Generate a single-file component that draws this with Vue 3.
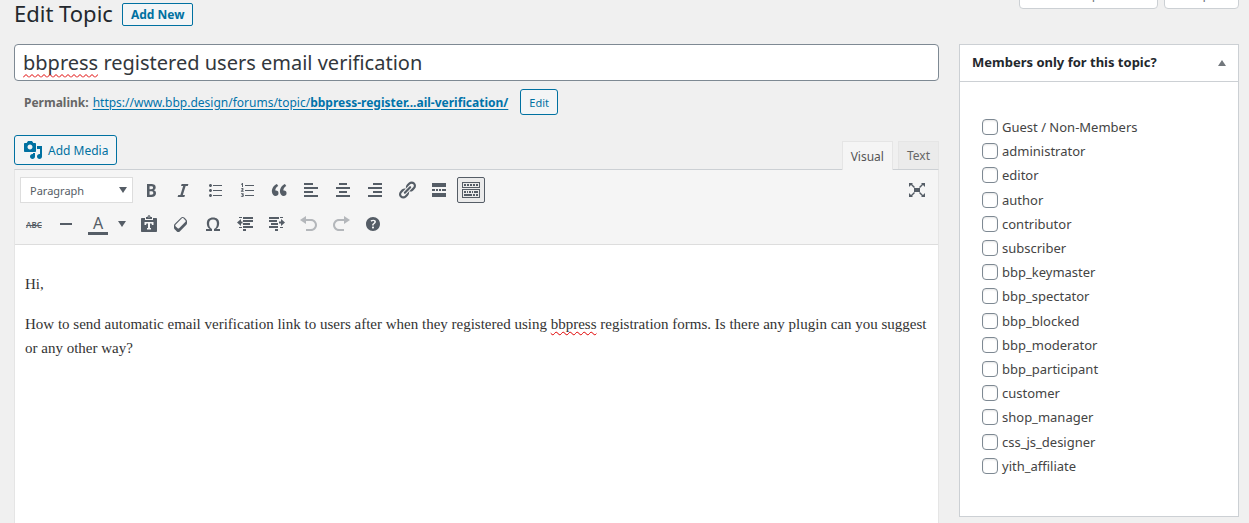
<script setup>
import { ref } from 'vue'

const title = ref('bbpress registered users email verification')
const roles = [
  'Guest / Non-Members', 'administrator', 'editor', 'author', 'contributor', 'subscriber',
  'bbp_keymaster', 'bbp_spectator', 'bbp_blocked', 'bbp_moderator', 'bbp_participant',
  'customer', 'shop_manager', 'css_js_designer', 'yith_affiliate',
]
const checked = ref([])
const collapsed = ref(false)

const rowOne = [
  { name: 'Bold', d: 'M6 4v13h4.54c1.37 0 2.46-.33 3.26-1 .8-.66 1.2-1.58 1.2-2.77 0-.84-.17-1.51-.51-2.01s-.9-.85-1.67-1.03v-.09c.57-.1 1.02-.4 1.36-.9s.51-1.13.51-1.91c0-1.14-.39-1.98-1.17-2.5C12.75 4.26 11.5 4 9.78 4H6zm2.57 5.15V6.26h1.36c.73 0 1.27.11 1.61.32.34.22.51.58.51 1.07 0 .54-.16.92-.47 1.15s-.82.35-1.51.35h-1.5zm0 2.19h1.6c1.44 0 2.16.53 2.16 1.61 0 .6-.17 1.05-.51 1.34s-.86.43-1.57.43H8.57v-3.38z' },
  { name: 'Italic', d: 'M14.78 6h-2.13l-2.8 9h2.12l-.62 2H4.6l.62-2h2.14l2.8-9H8.03l.62-2h6.75z' },
  { name: 'Bulleted list', d: 'M5.5 7C4.67 7 4 6.33 4 5.5 4 4.68 4.67 4 5.5 4 6.32 4 7 4.68 7 5.5 7 6.33 6.32 7 5.5 7zM8 5h9v1H8V5zm-2.5 7c-.83 0-1.5-.67-1.5-1.5C4 9.68 4.67 9 5.5 9c.82 0 1.5.68 1.5 1.5 0 .83-.68 1.5-1.5 1.5zM8 10h9v1H8v-1zm-2.5 7c-.83 0-1.5-.67-1.5-1.5 0-.82.67-1.5 1.5-1.5.82 0 1.5.68 1.5 1.5 0 .83-.68 1.5-1.5 1.5zM8 15h9v1H8v-1z' },
  { name: 'Numbered list', d: 'M8 5h9v1H8zM8 10h9v1H8zM8 15h9v1H8zM4 4.2 5.2 3H6v4H5V4.4l-.6.5zM4 8.6c.8-.8 2.6-.7 2.6.5 0 .8-.8 1.3-1.2 1.7h1.3v.9H3.9V11l1.300-1.200c.5-.5.200-.900-.700-.400zM4 13.200h2.600v1.500c.6.300.400 2.300-1.200 2.300-.600 0-1.100-.100-1.500-.400v-.800c.800.400 1.700.400 1.700-.100s-.500-.500-1-.500v-.700c.500 0 .900 0 .900-.400 0-.300-.800-.300-1.500 0z' },
  { name: 'Blockquote', d: 'M9.49 13.22c0-.74-.2-1.38-.61-1.9-.62-.78-1.83-.88-2.53-.72-.29-1.65 1.11-3.75 2.92-4.65L7.88 4c-2.73 1.3-5.42 4.28-4.96 8.05C3.21 14.43 4.59 16 6.54 16c.85 0 1.56-.25 2.12-.75s.83-1.18.83-2.03zm8.05 0c0-.74-.2-1.38-.61-1.9-.63-.78-1.83-.88-2.53-.72-.29-1.65 1.11-3.75 2.92-4.65L15.93 4c-2.73 1.3-5.41 4.28-4.95 8.05.29 2.38 1.66 3.95 3.61 3.95.85 0 1.56-.25 2.12-.75s.83-1.18.83-2.03z' },
  { name: 'Align left', d: 'M12 5V3H3v2h9zm5 4V7H3v2h14zm-5 4v-2H3v2h9zm5 4v-2H3v2h14z' },
  { name: 'Align center', d: 'M14 5V3H6v2h8zm3 4V7H3v2h14zm-3 4v-2H6v2h8zm3 4v-2H3v2h14z' },
  { name: 'Align right', d: 'M17 5V3H8v2h9zm0 4V7H3v2h14zm0 4v-2H8v2h9zm0 4v-2H3v2h14z' },
  { name: 'Insert link', d: 'M17.74 2.76c1.68 1.69 1.68 4.41 0 6.1l-1.53 1.52c-1.12 1.12-2.7 1.47-4.14 1.09l2.62-2.61.76-.77.76-.76c.84-.84.84-2.2 0-3.04-.84-.85-2.2-.85-3.04 0l-.77.76-3.38 3.38c-.37-1.44-.02-3.02 1.1-4.14l1.52-1.53c1.69-1.68 4.42-1.68 6.1 0zM8.59 13.43l5.34-5.34c.42-.42.42-1.1 0-1.52-.44-.43-1.13-.39-1.53 0l-5.33 5.34c-.42.42-.42 1.1 0 1.52.44.43 1.13.39 1.52 0zm-.76 2.29l4.14-4.15c.38 1.44.03 3.02-1.09 4.14l-1.52 1.53c-1.69 1.68-4.41 1.68-6.1 0-1.68-1.68-1.68-4.42 0-6.1l1.53-1.52c1.12-1.12 2.7-1.47 4.14-1.1l-4.14 4.15c-.85.84-.85 2.2 0 3.05.84.84 2.2.84 3.04 0z' },
  { name: 'Read more', d: 'M3 3h14v4H3zM3 9h3v2H3zM7 9h2v2H7zM10 9h2v2h-2zM13 9h4v2h-4zM3 13h14v4H3z' },
  { name: 'Toolbar toggle', active: true, d: 'M1 2h18v6H1zM2 3v4h16V3zM1 9h18v9H1zM2 10v7h16v-7zM3 4h2v2H3zM6 4h2v2H6zM9 4h2v2H9zM12 4h2v2h-2zM15 4h2v2h-2zM3 11h2v2H3zM6 11h1v2H6zM8 11h2v2H8zM11 11h1v2h-1zM13 11h4v2h-4zM3 14h8v2H3zM12 14h2v2h-2zM15 14h2v2h-2z' },
]
const rowTwo = [
  { name: 'Paste as text', d: 'M3 4h3v2h8V4h3c.6 0 1 .4 1 1v12c0 .6-.4 1-1 1H3c-.6 0-1-.4-1-1V5c0-.6.400-1 1-1zM7 5V3h1.500c0-2.500 3-2.500 3 0H13v2zM9.500 2.500v1h1v-1zM5.500 8v3H7l.5-1.500H9V14H8v1.500h4V14h-1V9.500h1.500L13 11h1.500V8z' },
  { name: 'Clear formatting', d: 'M14.29 4.59l1.1 1.11c.41.4.61.94.61 1.47v2.12c0 .53-.2 1.07-.61 1.47l-6.63 6.63c-.4.41-.94.61-1.47.61s-1.07-.2-1.47-.61l-1.11-1.1-1.1-1.11c-.41-.4-.61-.94-.61-1.47v-2.12c0-.54.2-1.07.61-1.48l6.63-6.62c.4-.41.94-.61 1.47-.61s1.06.2 1.47.61zm-6.21 9.7l6.42-6.42c.39-.39.39-1.03 0-1.43L12.36 4.3c-.19-.19-.45-.29-.72-.29s-.52.1-.71.29l-6.42 6.42c-.39.4-.39 1.04 0 1.43l2.14 2.14c.38.38 1.04.38 1.43 0z' },
  { name: 'Special character', d: 'M10 5.4c1.27 0 2.24.36 2.91 1.08.66.71 1 1.76 1 3.13 0 1.28-.23 2.37-.69 3.27-.47.89-1.27 1.52-2.22 2.12v2h6v-2h-3.69c.92-.64 1.62-1.34 2.12-2.34.49-1.01.74-2.13.74-3.35 0-1.78-.55-3.19-1.65-4.22S11.92 3.54 10 3.54s-3.43.53-4.52 1.57c-1.1 1.04-1.65 2.44-1.65 4.2 0 1.21.24 2.31.73 3.33.48 1.01 1.19 1.71 2.1 2.36H3v2h6v-2c-.98-.64-1.8-1.28-2.24-2.17-.45-.89-.67-1.96-.67-3.22 0-1.37.33-2.41 1-3.13C7.75 5.76 8.72 5.4 10 5.4z' },
  { name: 'Decrease indent', d: 'M4 3h3v1H4zM8 3h10v2H8zM8 6h10v2H8zM8 9h7v2H8zM8 12h10v2H8zM4 13h3v1H4zM8 15h3v2H8zM2 8.500 6 5v2.500h1.500v2H6V12z' },
  { name: 'Increase indent', d: 'M2 3h10v2H2zM13 3h3v1h-3zM2 6h8v2H2zM4 9h7v2H4zM2 12h9v2H2zM13 13h3v1h-3zM8 15h3v2H8zM18 8.500 14 5v2.500h-2v2h2V12z' },
  { name: 'Undo', disabled: true, d: 'M12 5H7V2L1 6l6 4V7h5c2.2 0 4 1.8 4 4s-1.8 4-4 4H7v2h5c3.3 0 6-2.7 6-6s-2.7-6-6-6z' },
  { name: 'Redo', disabled: true, d: 'M8 5h5V2l6 4-6 4V7H8c-2.2 0-4 1.8-4 4s1.8 4 4 4h5v2H8c-3.3 0-6-2.7-6-6s2.700-6 6-6z' },
  { name: 'Keyboard shortcuts', d: 'M17 10c0-3.87-3.14-7-7-7-3.87 0-7 3.13-7 7s3.13 7 7 7c3.86 0 7-3.13 7-7zm-6.3 1.48H9.14v-.43c0-.38.08-.7.24-.98s.46-.57.88-.89c.41-.29.68-.53.81-.71.14-.18.2-.39.2-.62 0-.25-.09-.44-.28-.58-.19-.13-.45-.19-.79-.19-.58 0-1.25.19-2 .57l-.64-1.28c.87-.49 1.8-.74 2.77-.74.81 0 1.45.2 1.92.58.48.39.71.91.71 1.55 0 .43-.09.8-.29 1.11-.19.32-.57.67-1.11 1.06-.38.28-.61.49-.71.63-.1.15-.15.34-.15.57v.35zm-1.47 2.74c-.18-.17-.27-.42-.27-.73 0-.33.08-.58.26-.75s.43-.25.77-.25c.32 0 .57.09.75.26s.27.42.27.74c0 .3-.09.55-.27.72-.18.18-.43.27-.75.27-.33 0-.58-.09-.76-.26z' },
]
</script>

<template>
  <div class="page">
    <header class="top">
      <div class="heading">
        <h1>Edit Topic</h1>
        <a class="add-new" href="#new">Add New</a>
      </div>
      <div class="screen-meta">
        <button type="button" class="meta-tab options">Screen Options ▾</button>
        <button type="button" class="meta-tab">Help ▾</button>
      </div>
    </header>

    <div class="columns">
      <main class="main">
        <div class="title-wrap">
          <input v-model="title" class="title" type="text" aria-label="Topic title" spellcheck="false">
          <svg class="title-wave" width="75" height="4" aria-hidden="true">
            <defs>
              <pattern id="wave" width="6" height="4" patternUnits="userSpaceOnUse">
                <path d="M0 3.500 3 .5 6 3.500" fill="none" stroke="#e00000" />
              </pattern>
            </defs>
            <rect width="75" height="4" fill="url(#wave)" />
          </svg>
        </div>

        <div class="permalink">
          <strong>Permalink:</strong>
          <a href="#topic">https://www.bbp.design/forums/topic/<b>bbpress-register...ail-verification/</b></a>
          <button type="button" class="edit">Edit</button>
        </div>

        <div class="tools">
          <button type="button" class="media">
            <svg width="20" height="20" viewBox="0 0 20 20" aria-hidden="true">
              <path fill-rule="evenodd" d="M13 11V4c0-.55-.45-1-1-1h-1.670L9 1H5L3.670 3H2c-.55 0-1 .45-1 1v7c0 .55.45 1 1 1h10c.55 0 1-.45 1-1zM7 4.500c1.380 0 2.500 1.120 2.500 2.500S8.380 9.500 7 9.500 4.500 8.380 4.500 7 5.620 4.500 7 4.500zM14 6h5v10.500c0 1.380-1.120 2.500-2.500 2.500S14 17.880 14 16.500s1.120-2.500 2.500-2.500c.17 0 .34.020.500.050V9h-3V6zM10 14.050V13h2v3.500c0 1.380-1.120 2.500-2.500 2.500S7 17.880 7 16.500 8.120 14 9.500 14c.17 0 .34.020.500.050z" />
            </svg>
            <span>Add Media</span>
          </button>
          <div class="tabs">
            <button type="button" class="tab on">Visual</button>
            <button type="button" class="tab">Text</button>
          </div>
        </div>

        <section class="editor">
          <div class="toolbar">
            <div class="row">
              <div class="format">
                <select aria-label="Block format"><option>Paragraph</option></select>
                <svg width="8" height="6" aria-hidden="true"><path d="M0 0h8L4 6z" /></svg>
              </div>
              <button v-for="t in rowOne" :key="t.name" type="button" class="tool" :class="{ active: t.active }" :aria-label="t.name">
                <svg width="20" height="20" viewBox="0 0 20 20" fill-rule="evenodd"><path :d="t.d" /></svg>
              </button>
              <button type="button" class="tool full" aria-label="Distraction-free writing">
                <svg width="20" height="20" viewBox="0 0 20 20">
                  <path d="M7 8h6v4H7zM2 3h4L5 4l3 3-1 1-3-3-2 2zM18 3h-4l1 1-3 3 1 1 3-3 2 2zM2 17h4l-1-1 3-3-1-1-3 3-2-2zM18 17h-4l1-1-3-3 1-1 3 3 2-2z" />
                </svg>
              </button>
            </div>
            <div class="row second">
              <button type="button" class="tool strike"><s>ABC</s></button>
              <button type="button" class="tool" aria-label="Horizontal line">
                <svg width="20" height="20" viewBox="0 0 20 20"><path d="M4 9h12v2H4z" /></svg>
              </button>
              <button type="button" class="tool color"><span>A</span></button>
              <button type="button" class="tool caret" aria-label="Choose text color">
                <svg width="8" height="6"><path d="M0 0h8L4 6z" /></svg>
              </button>
              <button v-for="t in rowTwo" :key="t.name" type="button" class="tool" :disabled="t.disabled" :aria-label="t.name">
                <svg width="20" height="20" viewBox="0 0 20 20" fill-rule="evenodd"><path :d="t.d" /></svg>
              </button>
            </div>
          </div>
          <div class="content" contenteditable="true" spellcheck="false" role="textbox" aria-label="Topic content">
            <p>Hi,</p>
            <p>How to send automatic email verification link to users after when they registered using <span class="miss">bbpress</span> registration forms. Is there any plugin can you suggest or any other way?</p>
          </div>
        </section>
      </main>

      <aside class="box">
        <div class="box-head">
          <h2>Members only for this topic?</h2>
          <button type="button" aria-label="Toggle panel" @click="collapsed = !collapsed">
            <svg width="8" height="6"><path d="M0 6h8L4 0z" /></svg>
          </button>
        </div>
        <ul v-show="!collapsed" class="roles">
          <li v-for="role in roles" :key="role">
            <label><input v-model="checked" type="checkbox" :value="role"><span>{{ role }}</span></label>
          </li>
        </ul>
      </aside>
    </div>
  </div>
</template>

<style>
body { margin: 0; background: #f0f0f0; }
</style>

<style scoped>
* { box-sizing: border-box; }
.page {
  display: flex;
  flex-direction: column;
  min-height: 100vh;
  overflow: hidden;
  padding: 0 10px 0 14px;
  font-family: "Noto Sans", "Open Sans", sans-serif;
  font-size: 12px;
  color: #444;
}
button, input, select { font: inherit; color: inherit; }
button { cursor: pointer; padding: 0; }
h1, h2, p, ul { margin: 0; padding: 0; }
.top { display: flex; justify-content: space-between; height: 44px; }
.heading { display: flex; align-items: center; gap: 9px; height: 28px; }
h1 { padding-bottom: 2px; font-size: 22px; line-height: 26px; font-weight: 400; color: #23282d; }
.add-new {
  padding: 0 8px;
  border: 1px solid #0071a1;
  border-radius: 2px;
  background: #f3f5f6;
  color: #0071a1;
  font-weight: 700;
  line-height: 21px;
  text-decoration: none;
}
.screen-meta { display: flex; gap: 6px; height: 30px; margin-top: -21px; }
.meta-tab {
  padding: 0 17px;
  border: 1px solid #ccd0d4;
  border-radius: 0 0 4px 4px;
  background: #fff;
  color: #72777c;
  font-size: 13px;
}
.columns { display: grid; grid-template-columns: minmax(0, 1fr) 280px; gap: 20px; flex: 1; }
.main { display: flex; flex-direction: column; }
.title-wrap { position: relative; }
.title {
  display: block;
  width: 100%;
  height: 37px;
  padding: 0 8px;
  border: 1px solid #7e8993;
  border-radius: 4px;
  background: #fff;
  color: #32373c;
  font-size: 20px;
}
.title-wave { position: absolute; left: 9px; top: 30px; }
.permalink { display: flex; align-items: center; gap: 4px; height: 26px; margin-top: 8px; padding-left: 10px; color: #666; }
.permalink a { color: #0073aa; text-underline-offset: 2px; }
.edit {
  height: 26px;
  margin-left: 8px;
  padding: 0 8px;
  border: 1px solid #0071a1;
  border-radius: 3px;
  background: #f3f5f6;
  color: #0071a1;
  font-size: 11px;
}
.tools { display: flex; justify-content: space-between; align-items: flex-start; height: 34px; margin-top: 20px; }
.media {
  display: flex;
  align-items: center;
  gap: 5px;
  height: 30px;
  padding: 0 8px;
  border: 1px solid #0071a1;
  border-radius: 3px;
  background: #f3f5f6;
  color: #0071a1;
}
.media svg { fill: #0071a1; }
.tabs { display: flex; gap: 5px; align-self: flex-end; }
.tab {
  position: relative;
  height: 28px;
  padding: 0 8px;
  border: 1px solid #e5e5e5;
  border-bottom: 0;
  background: #ebebeb;
  color: #666;
}
.tab.on { z-index: 1; height: 29px; margin-bottom: -1px; background: #f5f5f5; color: #555; }
.editor { display: flex; flex-direction: column; flex: 1; border: 1px solid #e5e5e5; border-top-color: #ccd0d4; border-bottom: 0; background: #fff; }
.toolbar { padding: 3px 5px; border-bottom: 1px solid #ddd; background: #f5f5f5; }
.row { display: flex; align-items: center; height: 34px; }
.format { position: relative; width: 113px; margin-right: 2px; }
.format select {
  display: block;
  appearance: none;
  width: 100%;
  height: 26px;
  padding: 0 9px;
  border: 1px solid #ddd;
  border-radius: 0;
  background: #fff;
  color: #555d66;
  font-size: 11px;
}
.format svg { position: absolute; right: 6px; top: 10px; fill: #555d66; pointer-events: none; }
.tool {
  display: flex;
  align-items: center;
  justify-content: center;
  width: 28px;
  height: 26px;
  margin: 0 2px;
  border: 1px solid transparent;
  border-radius: 2px;
  background: transparent;
  color: #555d66;
}
.tool svg { flex: none; fill: #555d66; }
.tool:disabled { opacity: 0.4; }
.tool.active { border-color: #555d66; background: #ebebeb; }
.tool.full { margin-left: auto; }
.second .tool:first-child { margin-left: 0; }
.strike { font-size: 8px; font-weight: 600; }
.color span { width: 20px; border-bottom: 3px solid #555d66; font-size: 16px; line-height: 18px; }
.tool.caret { width: 15px; margin-right: 4px; margin-left: 0; }
.content { padding: 27px 4px 27px 10px; font: 15px/24px "Liberation Serif", serif; color: #333; outline: none; }
.content p + p { margin-top: 16px; }
.miss { text-decoration: underline wavy #e00000 1px; text-decoration-skip-ink: none; text-underline-offset: 2px; }
.box { align-self: start; border: 1px solid #ccd0d4; background: #fff; }
.box-head { display: flex; align-items: center; justify-content: space-between; height: 37px; padding: 0 12px; border-bottom: 1px solid #ccd0d4; }
h2 { padding-bottom: 2px; font-size: 13px; line-height: 20px; font-weight: 700; color: #23282d; }
.box-head button { display: flex; align-items: center; height: 20px; border: 0; background: none; }
.box-head svg { fill: #72777c; }
.roles { display: grid; grid-auto-rows: 1fr; height: 363px; margin: 33px 22px 38px; list-style: none; }
.roles label { display: flex; align-items: center; gap: 4px; height: 24px; font-size: 13px; }
.roles input {
  appearance: none;
  width: 16px;
  height: 16px;
  margin: 0;
  border: 1px solid #7e8993;
  border-radius: 4px;
  background: #fff;
  box-shadow: inset 0 1px 2px rgba(0, 0, 0, 0.1);
}
.roles input:checked { background: #0071a1; }
</style>
